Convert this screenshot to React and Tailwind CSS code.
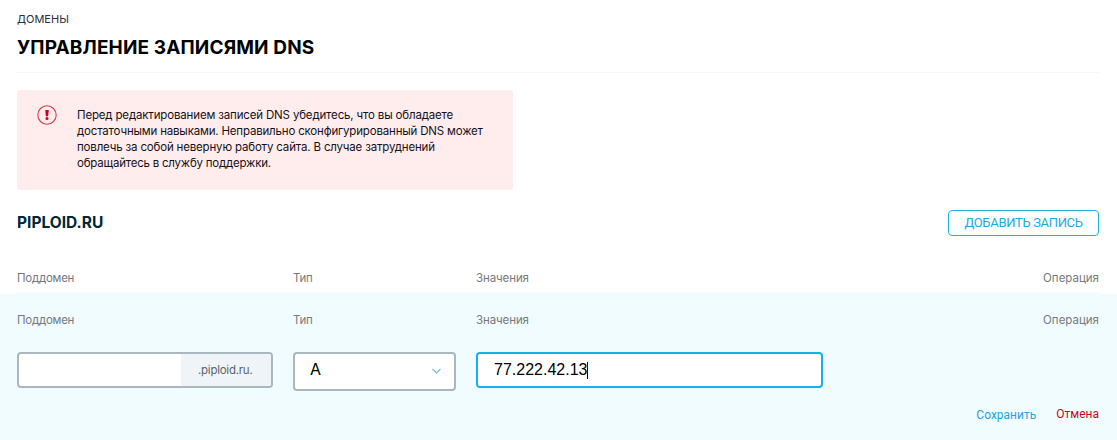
import { useState } from 'react';

const alertLines = [
    { text: 'Перед редактированием записей DNS убедитесь, что вы обладаете', spacing: 'tracking-[-0.16px]' },
    { text: 'достаточными навыками. Неправильно сконфигурированный DNS может', spacing: 'tracking-[-0.18px]' },
    { text: 'повлечь за собой неверную работу сайта. В случае затруднений', spacing: 'tracking-[-0.17px]' },
    { text: 'обращайтесь в службу поддержки.', spacing: 'tracking-[-0.22px]' }
];

const ColumnTitles = () => (
    <div className="grid h-4 grid-cols-[276px_183px_1fr_auto] pt-px text-[11.5px] leading-4 text-[#77797d]">
        <span className="tracking-[-0.25px]">Поддомен</span>
        <span className="tracking-[-0.3px]">Тип</span>
        <span className="tracking-[-0.1px]">Значения</span>
        <span>Операция</span>
    </div>
);

const AlertIcon = () => (
    <svg className="h-5 w-5 shrink-0" viewBox="0 0 20 20" fill="none">
        <circle cx="10" cy="10" r="9.2" stroke="#dc3a54" strokeWidth="1.1" />
        <path d="M8.2 5h3.6l-.7 6.3H8.9z" fill="#d0021b" />
        <circle cx="10" cy="13.5" r="1.5" fill="#d0021b" />
    </svg>
);

const Alert = () => (
    <div className="mt-[17px] flex h-[100px] w-[496px] rounded-[3px] bg-[#ffeded] pt-[15px] pl-5">
        <AlertIcon />
        <div className="ml-5 pt-[2px] text-[11.5px] leading-4 whitespace-nowrap text-[#16111a]">
            {alertLines.map((line) => (
                <p key={line.text} className={line.spacing}>{line.text}</p>
            ))}
        </div>
    </div>
);

const RecordForm = () => {
    const [subdomain, setSubdomain] = useState('');
    const [value, setValue] = useState('77.222.42.13');

    return (
        <div className="h-[146px] bg-[#f0fcff] pt-[17px] pr-[18px] pl-[17px]">
            <ColumnTitles />

            <div className="mt-[25px] flex h-[39px] items-start gap-5">
                {/* Subdomain */}
                <div className="flex h-9 w-64 overflow-hidden rounded-[4px] border-2 border-[#a9b7bf] bg-white">
                    <input
                        value={subdomain}
                        onChange={(e) => setSubdomain(e.target.value)}
                        className="w-[162px] px-4 text-base outline-none"
                    />
                    <span className="flex flex-1 items-center bg-[#eef4f7] pl-[17px] text-[11.5px] leading-4 tracking-[-0.25px] text-[#5d6469]">
                        .piploid.ru.
                    </span>
                </div>

                {/* Record type */}
                <button className="flex h-[39px] w-[163px] items-start justify-between rounded-[4px] border-2 border-[#a9b7bf] bg-white pt-[5px] pr-[12px] pl-[15px] text-[16px] leading-5 text-black">
                    <span>A</span>
                    <svg className="mt-[7px] h-[10px] w-[11px]" viewBox="0 0 11 10" fill="none">
                        <path d="M1.5 3l4 4 4-4" stroke="#6fb9dc" strokeWidth="1.1" />
                    </svg>
                </button>

                {/* Value */}
                <label className="relative flex h-9 w-[347px] items-center rounded-[4px] border-2 border-[#18b0e9] bg-white pl-4 font-['Liberation_Sans',sans-serif] text-[16px] text-black">
                    <input
                        value={value}
                        onChange={(e) => setValue(e.target.value)}
                        className="w-full outline-none"
                    />
                    <span className="absolute top-[8px] left-[109px] h-[17px] w-px bg-black" />
                </label>
            </div>

            <div className="mt-[14px] flex justify-end gap-5 font-['Roboto',sans-serif] text-[12px] leading-4">
                <button className="mt-[2px] h-4 text-[#2b9fe0]">Сохранить</button>
                <button className="mt-px h-4 text-[#d0021b]">Отмена</button>
            </div>
        </div>
    );
};

export default function App() {
    return (
        <main className="h-[440px] w-[1117px] overflow-hidden bg-white font-['Inter',sans-serif]">
            <div className="pr-[18px] pl-[17px] pt-[11px]">
                <p className="h-4 text-[11px] leading-4 text-[#2c2e38]">ДОМЕНЫ</p>
                <h1 className="mt-[9px] h-[23px] text-[19px] leading-[23px] font-bold tracking-[0.13px] whitespace-nowrap text-black">
                    УПРАВЛЕНИЕ ЗАПИСЯМИ DNS
                </h1>
                <div className="mt-[13px] border-b border-[#f3f5f6]" />

                <Alert />

                <div className="mt-5 flex h-[26px] items-center justify-between">
                    <h2 className="text-[15.5px] leading-5 font-bold text-[#00263a]">PIPLOID.RU</h2>
                    <button className="h-[26px] w-[151px] rounded-[4px] border border-[#1fb2e8] font-['Roboto',sans-serif] text-[13px] leading-4 tracking-[-0.33px] whitespace-nowrap text-[#1aa9e4]">
                        ДОБАВИТЬ ЗАПИСЬ
                    </button>
                </div>

                <div className="mt-[33px]">
                    <ColumnTitles />
                </div>

                <div className="mt-[7px] h-[2px] bg-[#f0fcff]" />
            </div>

            <RecordForm />
        </main>
    );
}
